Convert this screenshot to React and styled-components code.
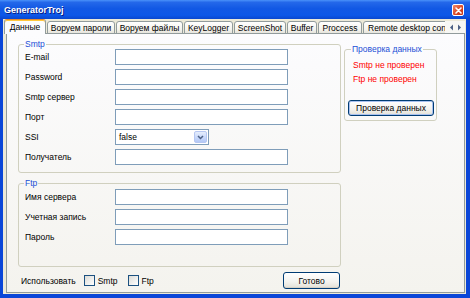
import React from 'react';
import styled, { createGlobalStyle } from 'styled-components';

const GlobalStyle = createGlobalStyle`
  html, body {
    margin: 0;
    padding: 0;
    background: #ffffff;
  }
  body {
    font-family: "Liberation Sans", Arial, sans-serif;
    font-size: 8.5px;
    color: #000000;
  }
  * {
    box-sizing: border-box;
  }
`;

const TABS = [
  { label: 'Данные', width: 42, active: true },
  { label: 'Воруем пароли', width: 68 },
  { label: 'Воруем файлы', width: 67 },
  { label: 'KeyLogger', width: 49 },
  { label: 'ScreenShot', width: 52 },
  { label: 'Buffer', width: 30 },
  { label: 'Proccess', width: 44 },
  { label: 'Remote desktop control', width: 106 },
];

const SMTP_FIELDS = ['E-mail', 'Password', 'Smtp сервер', 'Порт', 'SSI', 'Получатель'];
const FTP_FIELDS = ['Имя сервера', 'Учетная запись', 'Пароль'];

const App = () => (
  <>
    <GlobalStyle />
    <Window>
      <TitleBar>
        <Title>GeneratorTroj</Title>
        <CloseButton aria-label="close">
          <svg width="7" height="7" viewBox="0 0 7 7">
            <path d="M1 1L6 6M6 1L1 6" stroke="#fff" strokeWidth="1.6" strokeLinecap="round" />
          </svg>
        </CloseButton>
      </TitleBar>
      <Frame>
        <TabStrip>
          <TabList>
            {TABS.map(tab => (
              <Tab key={tab.label} $active={tab.active} $width={tab.width}>
                {tab.label}
              </Tab>
            ))}
          </TabList>
          <Scroller>
            <svg width="5" height="7" viewBox="0 0 5 7">
              <path d="M4 0.5L1 3.5L4 6.5Z" fill="#4D6185" />
            </svg>
            <svg width="5" height="7" viewBox="0 0 5 7">
              <path d="M1 0.5L4 3.5L1 6.5Z" fill="#4D6185" />
            </svg>
          </Scroller>
        </TabStrip>
        <TabPage>
          <Layout>
            <LeftColumn>
              <Group $padBottom={7}>
                <Legend>Smtp</Legend>
                <Fields>
                  {SMTP_FIELDS.map(name => (
                    <Row key={name}>
                      <Label>{name}</Label>
                      {name === 'SSI' ? (
                        <Combo>
                          <ComboValue>false</ComboValue>
                          <ComboButton>
                            <svg width="7" height="5" viewBox="0 0 7 5">
                              <path d="M1 1L3.5 3.5L6 1" stroke="#4D6185" strokeWidth="1.5" fill="none" />
                            </svg>
                          </ComboButton>
                        </Combo>
                      ) : (
                        <TextBox />
                      )}
                    </Row>
                  ))}
                </Fields>
              </Group>
              <Group $padBottom={21}>
                <Legend>Ftp</Legend>
                <Fields $top={1}>
                  {FTP_FIELDS.map(name => (
                    <Row key={name}>
                      <Label>{name}</Label>
                      <TextBox />
                    </Row>
                  ))}
                </Fields>
              </Group>
            </LeftColumn>
            <CheckGroup>
              <Legend $offset={3}>Проверка данных</Legend>
              <Status $top={6}>Smtp не проверен</Status>
              <Status $top={4}>Ftp не проверен</Status>
              <Button $width={86} $top={16} $default>Проверка данных</Button>
            </CheckGroup>
            <Footer>
              <UseLabel>Использовать</UseLabel>
              <CheckItem>
                <CheckBox />
                Smtp
              </CheckItem>
              <CheckItem>
                <CheckBox />
                Ftp
              </CheckItem>
              <Spacer />
              <Button $width={57} $height={17}>Готово</Button>
            </Footer>
          </Layout>
        </TabPage>
      </Frame>
    </Window>
  </>
);

const Window = styled.div`
  width: 470px;
  height: 298px;
  display: flex;
  flex-direction: column;
  background: #0a46d8;
`;

const TitleBar = styled.div`
  height: 19px;
  flex: none;
  display: flex;
  align-items: center;
  justify-content: space-between;
  padding: 0 6px 0 4px;
  background: linear-gradient(
    #4a92fa 0%,
    #2468ea 12%,
    #1258e4 45%,
    #0d57e8 80%,
    #0a47cf 100%
  );
`;

const Title = styled.span`
  font-size: 9px;
  font-weight: bold;
  color: #ffffff;
  text-shadow: 1px 1px 0 #0a1a80;
`;

const CloseButton = styled.div`
  width: 12px;
  height: 12px;
  margin-top: 1px;
  display: flex;
  align-items: center;
  justify-content: center;
  border: 1px solid #ffffff;
  border-radius: 2px;
  background: linear-gradient(135deg, #f08a6c, #d8431f 60%, #c1361a);
`;

const Frame = styled.div`
  flex: 1;
  display: flex;
  flex-direction: column;
  margin: 0 4px 4px 3px;
  padding: 0 1px 1px 3px;
  background: #ece9d8;
`;

const TabStrip = styled.div`
  height: 15px;
  flex: none;
  display: flex;
  align-items: flex-end;
  margin-left: -2px;
  background: linear-gradient(to top, #919b9c 1px, transparent 1px);
`;

const TabList = styled.div`
  flex: 1;
  height: 100%;
  display: flex;
  align-items: flex-end;
  overflow: hidden;
`;

const Tab = styled.div`
  flex: none;
  width: ${p => p.$width}px;
  height: ${p => (p.$active ? 15 : 13)}px;
  margin-left: ${p => (p.$active ? 0 : 1)}px;
  display: flex;
  align-items: center;
  justify-content: ${p => (p.$width > 100 ? 'flex-start' : 'center')};
  padding-left: ${p => (p.$width > 100 ? 4 : 0)}px;
  white-space: nowrap;
  overflow: hidden;
  line-height: 10px;
  border: 1px solid #919b9c;
  border-bottom: ${p => (p.$active ? 'none' : '1px solid #919b9c')};
  border-top-color: ${p => (p.$active ? '#e68b2c' : '#919b9c')};
  border-radius: 3px 3px 0 0;
  background: ${p =>
    p.$active ? '#fcfcfe' : 'linear-gradient(#ffffff, #f3f2ec 70%, #e6e4dc)'};
  box-shadow: ${p => (p.$active ? 'inset 0 1px 0 #ffc73c' : 'none')};
`;

const Scroller = styled.div`
  flex: none;
  width: 20px;
  height: 13px;
  display: flex;
  align-items: center;
  justify-content: space-around;
  padding: 0 2px;
  background: #f7f7f4;
  border-bottom: 1px solid #919b9c;
`;

const TabPage = styled.div`
  flex: 1;
  border: 1px solid #919b9c;
  border-top: none;
  background: linear-gradient(#fcfcfe, #f4f3ee);
  padding: 5px 0 0 11px;
`;

const Layout = styled.div`
  display: grid;
  grid-template-columns: 323px 93px;
  column-gap: 3px;
  align-items: start;
`;

const LeftColumn = styled.div`
  display: flex;
  flex-direction: column;
  gap: 5px;
`;

const Group = styled.fieldset`
  margin: 0;
  min-inline-size: 0;
  padding: 0 6px ${p => p.$padBottom}px 6px;
  border: 1px solid #d0d0bf;
  border-radius: 3px;
`;

const Legend = styled.legend`
  padding: 0 1px;
  margin-left: ${p => (p.$offset ?? -1)}px;
  line-height: 10px;
  color: #1b4fd6;
`;

const Fields = styled.div`
  display: grid;
  gap: 4px;
  margin-top: ${p => p.$top || 0}px;
`;

const Row = styled.div`
  display: grid;
  grid-template-columns: 90px 173px;
  align-items: center;
`;

const Label = styled.span`
  line-height: 16px;
  white-space: nowrap;
`;

const TextBox = styled.div`
  height: 16px;
  border: 1px solid #7f9db9;
  background: #ffffff;
`;

const Combo = styled.div`
  width: 94px;
  height: 16px;
  display: flex;
  align-items: stretch;
  border: 1px solid #7f9db9;
  background: #ffffff;
  padding: 1px;
`;

const ComboValue = styled.span`
  flex: 1;
  padding-left: 2px;
  line-height: 12px;
`;

const ComboButton = styled.div`
  width: 13px;
  display: flex;
  align-items: center;
  justify-content: center;
  border: 1px solid #b6c7f2;
  border-radius: 2px;
  background: linear-gradient(#e6eefc, #c5d6fa 60%, #b4c8f6);
`;

const CheckGroup = styled(Group)`
  margin-top: 5px;
  padding: 0 3px 4px 3px;
`;

const Status = styled.div`
  padding-left: 5px;
  margin-top: ${p => p.$top}px;
  line-height: 10px;
  color: #ff0000;
  white-space: nowrap;
`;

const Button = styled.div`
  width: ${p => p.$width}px;
  height: ${p => p.$height || 16}px;
  margin-top: ${p => p.$top || 0}px;
  display: flex;
  align-items: center;
  justify-content: center;
  white-space: nowrap;
  border: 1px solid #003c74;
  border-radius: 3px;
  background: linear-gradient(#ffffff, #f3f2ee 60%, #e3e0d6);
  box-shadow: ${p =>
    p.$default ? 'inset 0 0 0 1px #a9c1ef' : 'inset 0 -1px 0 #d6d0c5'};
`;

const Footer = styled.div`
  grid-column: 1;
  margin-top: 5px;
  height: 17px;
  display: flex;
  align-items: center;
  padding: 0 1px 0 3px;
`;

const UseLabel = styled.span`
  margin-right: 8px;
`;

const CheckItem = styled.label`
  display: flex;
  align-items: center;
  gap: 3px;
  margin-right: 10px;
`;

const CheckBox = styled.span`
  width: 11px;
  height: 11px;
  border: 1px solid #1c5180;
  background: linear-gradient(135deg, #dcdcd7, #ffffff);
`;

const Spacer = styled.div`
  flex: 1;
`;

export default App;
